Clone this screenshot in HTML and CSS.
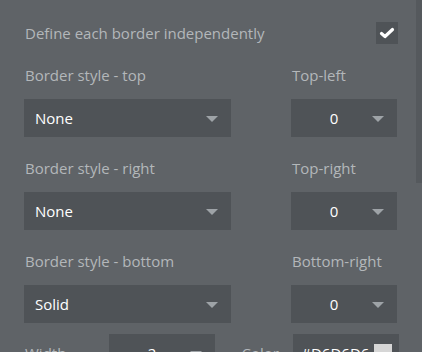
FILE: index.html
```html
<!DOCTYPE html>
<html lang="en">
<head>
<meta charset="UTF-8">
<meta name="viewport" content="width=device-width, initial-scale=1.0">
<title>Border settings</title>
<link rel="stylesheet" href="styles.css">
</head>
<body>
<div class="panel">
    <div class="check-row">
        <span class="label">Define each border independently</span>
        <span class="checkbox">
            <svg width="16" height="12" viewBox="0 0 16 12"><path d="M2.5 6.5 L6 9.5 L13.5 2.5" fill="none" stroke="#fff" stroke-width="3.2" stroke-linecap="round" stroke-linejoin="round"/></svg>
        </span>
    </div>

    <div class="field-row">
        <div class="field">
            <div class="label">Border style - top</div>
            <div class="select wide"><span>None</span><i class="caret"></i></div>
        </div>
        <div class="field">
            <div class="label">Top-left</div>
            <div class="select small"><span>0</span><i class="caret"></i></div>
        </div>
    </div>

    <div class="field-row">
        <div class="field">
            <div class="label">Border style - right</div>
            <div class="select wide"><span>None</span><i class="caret"></i></div>
        </div>
        <div class="field">
            <div class="label">Top-right</div>
            <div class="select small"><span>0</span><i class="caret"></i></div>
        </div>
    </div>

    <div class="field-row last">
        <div class="field">
            <div class="label">Border style - bottom</div>
            <div class="select wide"><span>Solid</span><i class="caret"></i></div>
        </div>
        <div class="field">
            <div class="label">Bottom-right</div>
            <div class="select small"><span>0</span><i class="caret"></i></div>
        </div>
    </div>

    <div class="inline-row">
        <span class="label inline-label">Width</span>
        <div class="select width-select"><span>2</span><i class="caret"></i></div>
        <span class="label inline-label color-label">Color</span>
        <div class="color-input"><span>#D6D6D6</span><i class="swatch"></i></div>
    </div>
</div>
<div class="scroll-thumb"></div>
</body>
</html>
```

FILE: styles.css
```css
body {
    font-family: "Open Sans", Arial, sans-serif;
    margin: 0;
    padding: 0;
    background-color: #5f6367;
    overflow: hidden;
    height: 352px;
}

.panel {
    padding: 22px 0 0 24px;
    width: 375px;
}

.label {
    color: #b3b7ba;
    font-size: 15px;
    line-height: 20px;
    padding-left: 1px;
}

.check-row {
    display: flex;
    justify-content: space-between;
    align-items: center;
    height: 22px;
    margin-bottom: 21px;
}

.checkbox {
    width: 22px;
    height: 22px;
    background-color: #4f5357;
    display: flex;
    align-items: center;
    justify-content: center;
    margin-right: 1px;
}

.field-row {
    display: grid;
    grid-template-columns: 207px 106px;
    column-gap: 60px;
    margin-bottom: 21px;
}

.field-row.last {
    margin-bottom: 11px;
}

.field .label {
    margin-bottom: 14px;
}

.select {
    background-color: #4f5357;
    height: 38px;
    display: flex;
    align-items: center;
    position: relative;
    color: #fff;
    font-size: 15px;
}

.select.wide span {
    padding-left: 11px;
}

.select.small span,
.select.width-select span {
    flex: 1;
    text-align: center;
    padding-right: 20px;
}

.caret {
    position: absolute;
    right: 13px;
    top: 17px;
    width: 0;
    height: 0;
    border-left: 6px solid transparent;
    border-right: 6px solid transparent;
    border-top: 6px solid #9ea3a7;
}

.inline-row {
    display: flex;
    align-items: center;
}

.inline-label {
    width: 84px;
}

.width-select {
    width: 107px;
}

.color-label {
    width: 52px;
    margin-left: 25px;
}

.color-input {
    width: 106px;
    height: 38px;
    background-color: #4f5357;
    display: flex;
    align-items: center;
    color: #fff;
    font-size: 15px;
}

.color-input span {
    padding-left: 8px;
    flex: 1;
}

.swatch {
    width: 18px;
    height: 18px;
    background-color: #d6d6d6;
    margin-right: 7px;
}

.scroll-thumb {
    position: absolute;
    top: 0;
    right: 0;
    width: 6px;
    height: 183px;
    background-color: #55595d;
}
```
